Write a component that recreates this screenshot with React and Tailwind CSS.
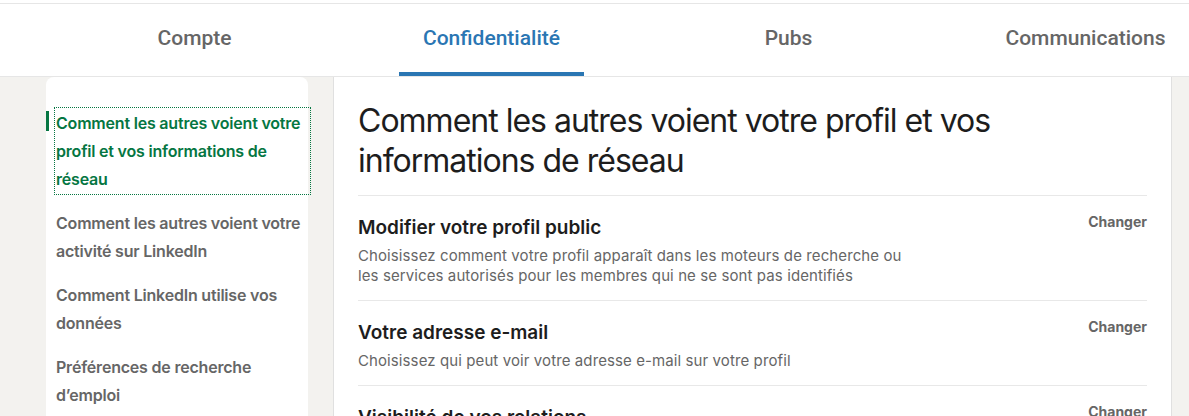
import React from 'react';

const tabs = [
    { label: "Compte" },
    { label: "Confidentialité", active: true },
    { label: "Pubs" },
    { label: "Communications" },
];

const navItems = [
    { label: "Comment les autres voient votre profil et vos informations de réseau", active: true },
    { label: "Comment les autres voient votre activité sur LinkedIn" },
    { label: "Comment LinkedIn utilise vos données" },
    { label: "Préférences de recherche d’emploi" },
];

const settings = [
    {
        title: "Modifier votre profil public",
        desc: "Choisissez comment votre profil apparaît dans les moteurs de recherche ou les services autorisés pour les membres qui ne se sont pas identifiés",
    },
    {
        title: "Votre adresse e-mail",
        desc: "Choisissez qui peut voir votre adresse e-mail sur votre profil",
    },
    {
        title: "Visibilité de vos relations",
        desc: "Choisissez qui peut voir votre liste de relations",
    },
];

const App = () => {
    return (
        <div className="h-[416px] bg-[#f3f2ef] font-['Inter','Noto_Sans',sans-serif] overflow-hidden">
            {/* top tabs */}
            <div className="bg-white pt-[3px]">
                <nav className="flex h-[74px] pl-[46px] border-t border-b border-[#e6e6e6] overflow-hidden font-['Roboto',sans-serif]">
                    {tabs.map(tab => (
                        <div key={tab.label} className="w-[297px] shrink-0 flex justify-center">
                            <button
                                className={`h-full px-6 pt-[2px] text-[21px] font-medium border-b-4 ${tab.active ? 'text-[#2a76b3] border-[#2a76b3]' : 'text-[#666] border-transparent'}`}
                            >
                                {tab.label}
                            </button>
                        </div>
                    ))}
                </nav>
            </div>

            <div className="flex pl-[46px] gap-[25px]">
                {/* side nav */}
                <aside className="w-[262px] shrink-0 bg-white rounded-t-lg pt-[30px] min-h-[400px]">
                    <ul className="flex flex-col gap-3">
                        {navItems.map(item => (
                            <li key={item.label} className="relative">
                                {item.active && (
                                    <span className="absolute left-0 top-[4px] w-[3px] h-5 bg-[#057642]" />
                                )}
                                <a
                                    href="#"
                                    className={`block ml-2 -mr-[3px] px-[2px] py-[2px] text-[16px] leading-7 font-semibold tracking-[-0.2px] ${item.active ? 'text-[#057642] outline-1 outline-dotted outline-[#057642] -outline-offset-1' : 'text-[#666]'}`}
                                >
                                    {item.label}
                                </a>
                            </li>
                        ))}
                    </ul>
                </aside>

                {/* main panel */}
                <main className="w-[839px] shrink-0 bg-white border-x border-[#e0e0e0] px-6 pt-6 min-h-[400px]">
                    <h1 className="text-[32px] leading-10 font-normal text-[#1d1d1d] tracking-[-1px] pb-[14px] border-b border-[#e8e8e8]">
                        Comment les autres voient votre profil et vos informations de réseau
                    </h1>

                    {settings.map(s => (
                        <section key={s.title} className="flex items-start justify-between gap-6 pt-5 pb-[14px] border-b border-[#e8e8e8]">
                            <div>
                                <h3 className="text-[19px] leading-6 font-semibold text-[#1d1d1d]">{s.title}</h3>
                                <p className="mt-1.5 max-w-[555px] text-[15px] leading-5 text-[#666] tracking-[0.1px]">{s.desc}</p>
                            </div>
                            <button className="-mt-[2px] text-[14px] leading-4 font-bold text-[#666] shrink-0">Changer</button>
                        </section>
                    ))}
                </main>
            </div>
        </div>
    );
};

export default App;
